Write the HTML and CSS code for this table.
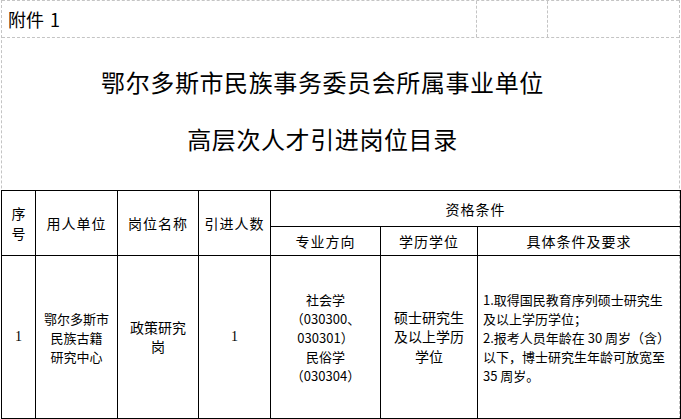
FILE: index.html
```html
<!DOCTYPE html>
<html lang="zh-CN">
<head>
<meta charset="utf-8">
<link rel="stylesheet" href="styles.css">
</head>
<body>
<div class="sheet">
  <div class="top-row">
    <div class="cell cell-a">附件 1</div>
    <div class="cell cell-b"></div>
    <div class="cell cell-c"></div>
  </div>
  <div class="title">
    <div class="title-line">鄂尔多斯市民族事务委员会所属事业单位</div>
    <div class="title-line">高层次人才引进岗位目录</div>
  </div>
  <table class="grid">
    <colgroup>
      <col class="w-no"><col class="w-unit"><col class="w-post"><col class="w-num">
      <col class="w-major"><col class="w-edu"><col class="w-req">
    </colgroup>
    <thead>
      <tr class="h1">
        <th rowspan="2" class="narrow">序<br>号</th>
        <th rowspan="2">用人单位</th>
        <th rowspan="2">岗位名称</th>
        <th rowspan="2">引进人数</th>
        <th colspan="3">资格条件</th>
      </tr>
      <tr class="h2">
        <th>专业方向</th>
        <th>学历学位</th>
        <th>具体条件及要求</th>
      </tr>
    </thead>
    <tbody>
      <tr class="body-row">
        <td class="num">1</td>
        <td class="small">鄂尔多斯市<br>民族古籍<br>研究中心</td>
        <td class="mid">政策研究<br>岗</td>
        <td class="num">1</td>
        <td class="small">社会学<br>（030300、<br>030301）<br>民俗学<br>（030304）</td>
        <td class="mid">硕士研究生<br>及以上学历<br>学位</td>
        <td class="req">1.取得国民教育序列硕士研究生<br>及以上学历学位；<br>2.报考人员年龄在 30 周岁（含）<br>以下，博士研究生年龄可放宽至<br>35 周岁。</td>
      </tr>
    </tbody>
  </table>
</div>
</body>
</html>
```

FILE: styles.css
```css
* { box-sizing: border-box; }
html, body { margin: 0; padding: 0; background: #fff; }
body {
  font-family: "Noto Sans CJK SC", "Liberation Sans", sans-serif;
  color: #000;
}
.sheet {
  margin-left: 1px;
  width: 679px;
  border-left: 1px dashed #c4c4c4;
  border-right: 1px dashed #c4c4c4;
}
.top-row {
  display: flex;
  height: 38px;
  border-top: 1px dashed #c4c4c4;
  border-bottom: 1px dashed #c4c4c4;
}
.cell { height: 100%; }
.cell-a {
  width: 475px;
  border-right: 1px dashed #c4c4c4;
  font-size: 18px;
  line-height: 36px;
  padding-left: 6px;
  word-spacing: 2px;
}
.cell-b {
  width: 71px;
  border-right: 1px dashed #c4c4c4;
}
.cell-c { flex: 1; }
.title {
  height: 152px;
  display: flex;
  flex-direction: column;
  align-items: center;
  padding-top: 27px;
  padding-right: 36px;
  gap: 23px;
}
.title-line {
  font-size: 24px;
  line-height: 34px;
  letter-spacing: 0.6px;
  font-weight: 400;
}
.grid {
  margin-left: -1px;
  width: 679px;
  border-collapse: collapse;
  table-layout: fixed;
}
.grid th, .grid td {
  border: 1px solid #000;
  padding: 0;
  text-align: center;
  vertical-align: middle;
}
.w-no { width: 34px; }
.w-unit { width: 82px; }
.w-post { width: 81px; }
.w-num { width: 72px; }
.w-major { width: 110px; }
.w-edu { width: 97px; }
.w-req { width: 203px; }
.grid th {
  font-size: 14px;
  font-weight: normal;
  letter-spacing: 1px;
  line-height: 20px;
}
.grid th.narrow { letter-spacing: 0; }
.h1 { height: 36px; }
.h2 { height: 29px; }
.body-row { height: 163px; }
.num {
  font-family: "Liberation Serif", serif;
  font-size: 14px;
}
.small {
  font-size: 13px;
  line-height: 19px;
}
.mid {
  font-size: 14px;
  line-height: 19.5px;
}
.grid td.req {
  text-align: left;
  font-size: 13px;
  line-height: 19px;
  padding-left: 5px;
  white-space: nowrap;
}
```
